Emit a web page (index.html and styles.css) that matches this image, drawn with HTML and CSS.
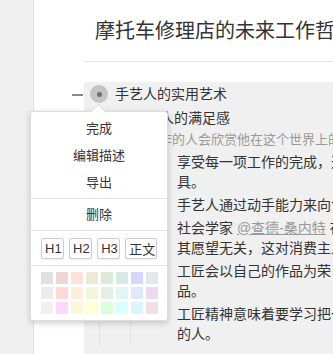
FILE: index.html
```html
<!DOCTYPE html>
<html lang="zh">
<head>
    <meta charset="UTF-8">
    <meta name="viewport" content="width=device-width, initial-scale=1.0">
    <title>摩托车修理店的未来工作哲学</title>
    <link rel="stylesheet" href="styles.css">
</head>
<body>

<div class="sidebar"></div>

<div class="page">
    <h1 class="title">摩托车修理店的未来工作哲学</h1>
    <div class="divider"></div>

    <div class="outline">
        <div class="node">
            <div class="toggle"><span class="dash"></span></div>
            <div class="node-body selected">
                <div class="row">
                    <span class="bullet active"><span class="dot"></span></span>
                    <span class="text">手艺人的实用艺术</span>
                </div>
                <div class="children">
                    <div class="node">
                        <div class="toggle"></div>
                        <div class="node-body">
                            <div class="row">
                                <span class="bullet"><span class="dot"></span></span>
                                <span class="text">匠人的满足感</span>
                            </div>
                            <div class="note">工作的人会欣赏他在这个世界上的成就，也会珍惜自己所创造的一切。</div>
                            <div class="children">
                                <div class="node">
                                    <div class="toggle"></div>
                                    <div class="node-body">
                                        <div class="row small">
                                            <span class="bullet"><span class="dot"></span></span>
                                            <span class="text">享受每一项工作的完成，这让他感到满足，也让他更加珍惜自己的工<br>具。</span>
                                        </div>
                                    </div>
                                </div>
                                <div class="node">
                                    <div class="toggle"></div>
                                    <div class="node-body">
                                        <div class="row small">
                                            <span class="bullet"><span class="dot"></span></span>
                                            <span class="text">手艺人通过动手能力来向世界证明自己的价值，而不仅仅是通过消费。</span>
                                        </div>
                                    </div>
                                </div>
                                <div class="node">
                                    <div class="toggle"></div>
                                    <div class="node-body">
                                        <div class="row small">
                                            <span class="bullet"><span class="dot"></span></span>
                                            <span class="text">社会学家 <a class="mention" href="#">@查德-桑内特</a> 在书中指出，工匠的满足感与金钱或<br>其愿望无关，这对消费主义社会来说是一个挑战。</span>
                                        </div>
                                    </div>
                                </div>
                                <div class="node">
                                    <div class="toggle"></div>
                                    <div class="node-body">
                                        <div class="row small">
                                            <span class="bullet"><span class="dot"></span></span>
                                            <span class="text">工匠会以自己的作品为荣，他们不会轻易放弃一件尚未完成的作<br>品。</span>
                                        </div>
                                    </div>
                                </div>
                                <div class="node">
                                    <div class="toggle"></div>
                                    <div class="node-body">
                                        <div class="row small">
                                            <span class="bullet"><span class="dot"></span></span>
                                            <span class="text">工匠精神意味着要学习把一件事情做到极致，成为真正懂得手艺<br>的人。</span>
                                        </div>
                                    </div>
                                </div>
                            </div>
                        </div>
                    </div>
                </div>
            </div>
        </div>
    </div>
</div>

<div class="menu">
    <div class="menu-section first">
        <div class="menu-item">完成</div>
        <div class="menu-item">编辑描述</div>
        <div class="menu-item">导出</div>
    </div>
    <div class="menu-section">
        <div class="menu-item">删除</div>
    </div>
    <div class="menu-section heads">
        <button class="head-btn">H1</button>
        <button class="head-btn">H2</button>
        <button class="head-btn">H3</button>
        <button class="head-btn">正文</button>
    </div>
    <div class="swatches">
        <span class="swatch" style="background:#e0e0e0"></span>
        <span class="swatch" style="background:#ecd6d6"></span>
        <span class="swatch" style="background:#fde3d6"></span>
        <span class="swatch" style="background:#ece9d6"></span>
        <span class="swatch" style="background:#d9ead6"></span>
        <span class="swatch" style="background:#d6e8e8"></span>
        <span class="swatch" style="background:#d9d6fd"></span>
        <span class="swatch" style="background:#e6e6f0"></span>
        <span class="swatch" style="background:#ececec"></span>
        <span class="swatch" style="background:#ffd7d7"></span>
        <span class="swatch" style="background:#ffefd9"></span>
        <span class="swatch" style="background:#f0f6d9"></span>
        <span class="swatch" style="background:#e1efe7"></span>
        <span class="swatch" style="background:#e0f5f6"></span>
        <span class="swatch" style="background:#e3e6ff"></span>
        <span class="swatch" style="background:#ecd9ec"></span>
        <span class="swatch" style="background:#f0f0f0"></span>
        <span class="swatch" style="background:#ffd6ff"></span>
        <span class="swatch" style="background:#fff6d9"></span>
        <span class="swatch" style="background:#ffffd6"></span>
        <span class="swatch" style="background:#d9ffd9"></span>
        <span class="swatch" style="background:#d6ffff"></span>
        <span class="swatch" style="background:#d9f6ff"></span>
        <span class="swatch" style="background:#f0dfe6"></span>
    </div>
</div>

</body>
</html>
```

FILE: styles.css
```css
html, body {
    height: 100%;
    overflow: hidden;
}
body {
    margin: 0;
    display: flex;
    font-family: "Liberation Sans", "Noto Sans CJK SC", sans-serif;
    color: #333;
    background-color: #fff;
}
.sidebar {
    width: 33px;
    flex-shrink: 0;
    background-color: #f0f0f0;
    border-right: 1px solid #e3e3e3;
}
.page {
    flex-shrink: 0;
    width: 700px;
    padding: 17px 0 0 38px;
}
.title {
    margin: 0 0 16px;
    padding-left: 23px;
    font-size: 20px;
    font-weight: normal;
    line-height: 28px;
    white-space: nowrap;
}
.divider {
    margin-left: 12px;
    height: 1px;
    background-color: #e5e5e5;
}
.outline {
    margin-top: 20px;
}
.node {
    display: flex;
}
.toggle {
    width: 12px;
    flex-shrink: 0;
    padding-top: 12px;
}
.dash {
    display: block;
    width: 11px;
    height: 2px;
    background-color: #888;
}
.node-body {
    flex: 1;
}
.node-body.selected {
    background-color: #f0f0f0;
    border-radius: 4px 0 0 0;
    min-height: 300px;
}
.row {
    display: flex;
    align-items: flex-start;
    padding: 2px 0;
    font-size: 14px;
    line-height: 20px;
    white-space: nowrap;
}
.row.small {
    padding: 1.5px 0;
}
.bullet {
    width: 18px;
    height: 20px;
    margin: 0 7px 0 6px;
    flex-shrink: 0;
    display: flex;
    align-items: center;
    justify-content: center;
    border-radius: 50%;
}
.bullet .dot {
    width: 6px;
    height: 6px;
    border-radius: 50%;
    background-color: #666;
}
.bullet.active {
    height: 18px;
    margin-top: 1px;
    background-color: #c4c4c4;
}
.bullet.active .dot {
    width: 5px;
    height: 5px;
    background-color: #707070;
}
.note {
    padding-left: 31px;
    font-size: 13px;
    line-height: 20px;
    color: #999;
    white-space: nowrap;
}
.children {
    margin-left: 15px;
    padding-left: 3px;
    border-left: 1px solid #e2e2e2;
}
.mention {
    color: #999;
    text-decoration: underline;
}
.menu {
    position: absolute;
    left: 30px;
    top: 111px;
    width: 136px;
    background-color: #fff;
    border: 1px solid #ddd;
    border-radius: 3px;
    box-shadow: 0 2px 6px rgba(0, 0, 0, 0.2);
    font-size: 13px;
}
.menu::before {
    content: "";
    position: absolute;
    left: 62px;
    top: -6px;
    width: 10px;
    height: 10px;
    background-color: #fff;
    border-top: 1px solid #ddd;
    border-left: 1px solid #ddd;
    transform: rotate(45deg);
}
.menu-section {
    position: relative;
    padding: 2px 0;
    border-bottom: 1px solid #e5e5e5;
}
.menu-section.first {
    padding-top: 3px;
}
.menu-item {
    height: 27px;
    line-height: 27px;
    text-align: center;
}
.heads {
    display: flex;
    gap: 5px;
    padding: 7px 10px 6px;
}
.head-btn {
    height: 21px;
    min-width: 23px;
    padding: 0 3px;
    font-family: "Liberation Sans", "Noto Sans CJK SC", sans-serif;
    font-size: 13px;
    color: #333;
    white-space: nowrap;
    background-color: #fff;
    border: 1px solid #ccc;
    border-radius: 2px;
    box-shadow: 0 1px 0 rgba(0, 0, 0, 0.05);
}
.swatches {
    display: grid;
    grid-template-columns: repeat(8, 12px);
    grid-auto-rows: 12px;
    gap: 3px;
    padding: 6px 9px 6px 10px;
}
.swatch {
    display: block;
}
```
